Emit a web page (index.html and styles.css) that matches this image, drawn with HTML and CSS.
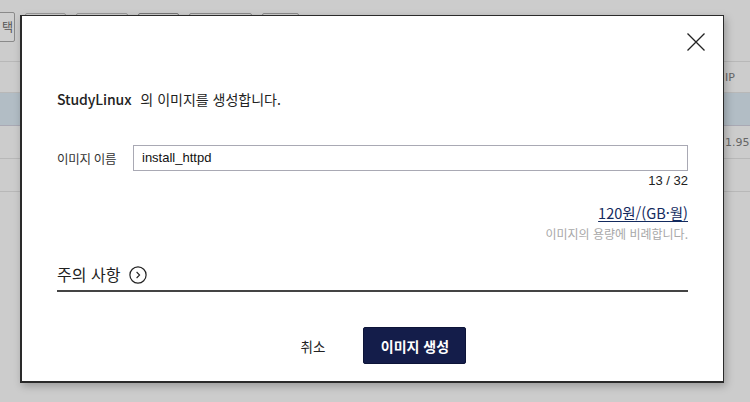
FILE: index.html
```
<!DOCTYPE html>
<html lang="ko">
<head>
<meta charset="utf-8">
<link rel="stylesheet" href="styles.css">
</head>
<body>
<div class="page">
  <div class="toolbar">
    <span class="tbtn first">택</span>
    <span class="tbtn w41"></span>
    <span class="tbtn w52"></span>
    <span class="tbtn w41"></span>
    <span class="tbtn w63"></span>
    <span class="tbtn w37"></span>
  </div>
  <div class="table">
    <div class="row head"><span class="cell">IP</span></div>
    <div class="row sel"></div>
    <div class="row"><span class="cell">1.95</span></div>
    <div class="row"></div>
  </div>
</div>

<div class="modal">
  <div class="modal-top">
    <button class="close" aria-label="닫기">
      <svg width="18" height="18" viewBox="0 0 18 18"><path d="M0.5 0.5 L17.5 17.5 M17.5 0.5 L0.5 17.5" stroke="#222" stroke-width="1.3" fill="none"/></svg>
    </button>
  </div>
  <p class="title"><span class="server">StudyLinux</span> 의 이미지를 생성합니다.</p>
  <div class="field">
    <label class="label">이미지 이름</label>
    <div class="input">install_httpd</div>
  </div>
  <div class="count">13 / 32</div>
  <div class="price"><a class="price-link">120원/(GB·월)</a></div>
  <div class="note">이미지의 용량에 비례합니다.</div>
  <div class="caution">
    <span class="caution-text">주의 사항</span>
    <svg class="caution-icon" width="18" height="18" viewBox="0 0 18 18"><circle cx="9" cy="9" r="8.1" stroke="#222" stroke-width="1.2" fill="none"/><path d="M7.6 6 L10.6 9 L7.6 12" stroke="#222" stroke-width="1.1" fill="none"/></svg>
  </div>
  <div class="actions">
    <button class="btn-cancel">취소</button>
    <button class="btn-primary">이미지 생성</button>
  </div>
</div>
</body>
</html>
```

FILE: styles.css
```
* { box-sizing: border-box; }
html, body { margin: 0; padding: 0; }
body {
  width: 750px;
  height: 402px;
  overflow: hidden;
  background: #cccccc;
  font-family: "Noto Sans CJK KR", "Noto Sans", sans-serif;
  position: relative;
}
.page { padding-top: 12px; }
.toolbar { display: flex; align-items: flex-start; gap: 10px; height: 30px; }
.tbtn {
  display: block;
  height: 30px;
  border: 1px solid #8a8a8a;
  border-radius: 2px;
  background: #cfcfcf;
}
.tbtn.first {
  width: 26px;
  margin-left: -11px;
  font-size: 12px;
  line-height: 28px;
  color: #555;
  text-align: right;
  padding-right: 1px;
  overflow: hidden;
}
.tbtn.w41 { width: 41px; margin-top: 1px; border-color: #999; }
.tbtn.w52 { width: 52px; margin-top: 1px; border-color: #999; }
.tbtn.w63 { width: 63px; margin-top: 1px; }
.tbtn.w37 { width: 37px; margin-top: 1px; }
.tbtn.w41 + .tbtn.w52 + .tbtn.w41 { border-color: #777; }
.table { margin-top: 19px; border-top: 1px solid #b8b8b8; }
.row {
  height: 32px;
  border-bottom: 1px solid #b8b8b8;
  display: flex;
  align-items: center;
  justify-content: flex-end;
  padding-right: 5px;
}
.row.head { height: 31px; }
.row.sel { background: #b2bdc5; border-bottom-color: #a9a9b4; height: 33px; }
.row + .row + .row { height: 33px; }
.cell {
  font-family: "DejaVu Sans", sans-serif;
  font-size: 11px;
  color: #666;
  width: 20px;
}

.modal {
  position: absolute;
  left: 20px;
  top: 15px;
  width: 704px;
  height: 368px;
  background: #fff;
  border: 1px solid #2a2a2a;
  border-left-width: 2px;
  border-bottom-width: 2px;
  box-shadow: 2px 3px 8px rgba(0,0,0,0.25);
  padding: 0 35px 0 35px;
  color: #222;
}
.modal-top { display: flex; justify-content: flex-end; padding-top: 17px; margin-right: -17px; }
.close {
  width: 18px; height: 18px; padding: 0; border: 0; background: none;
  display: block;
}
.close svg { display: block; }
.title {
  margin: 38px 0 0 0;
  font-size: 14px;
  line-height: 20px;
  color: #222;
}
.server { font-weight: 500; margin-right: 5px; letter-spacing: -0.1px; }
.field {
  margin-top: 36px;
  display: flex;
  align-items: center;
}
.label { width: 76px; font-size: 12.5px; color: #333; letter-spacing: -0.3px; }
.input {
  flex: 1;
  height: 26px;
  border: 1px solid #a9a9b4;
  font-family: "Liberation Sans", Arial, sans-serif;
  font-size: 13px;
  line-height: 24px;
  padding-left: 8px;
  color: #111;
}
.count {
  text-align: right;
  font-family: "Liberation Sans", Arial, sans-serif;
  font-size: 13px;
  line-height: 16px;
  margin-top: 2px;
  color: #222;
}
.price { text-align: right; margin-top: 14px; line-height: 18px; }
.price-link {
  font-size: 14.5px;
  color: #132a5e;
  text-decoration: underline;
  text-underline-offset: 2px;
}
.note {
  text-align: right;
  font-size: 12px;
  color: #a8a8a8;
  margin-top: 4px;
  line-height: 16px;
}
.caution {
  margin-top: 20px;
  display: flex;
  align-items: center;
  gap: 9px;
  height: 30px;
  border-bottom: 2px solid #444;
  padding-bottom: 4px;
}
.caution-text { font-size: 16px; color: #222; }
.caution-icon { display: block; margin-top: 2px; }
.actions {
  display: flex;
  justify-content: center;
  align-items: center;
  margin-top: 35px;
  gap: 38px;
  padding-left: 22px;
}
.btn-cancel {
  background: none;
  border: 0;
  padding: 0;
  font-family: inherit;
  font-size: 13.5px;
  color: #222;
}
.btn-primary {
  width: 103px;
  height: 37px;
  background: #141d4a;
  color: #fff;
  border: 1px solid #0d1438;
  border-radius: 2px;
  font-family: inherit;
  font-size: 14px;
  font-weight: 700;
}
```
